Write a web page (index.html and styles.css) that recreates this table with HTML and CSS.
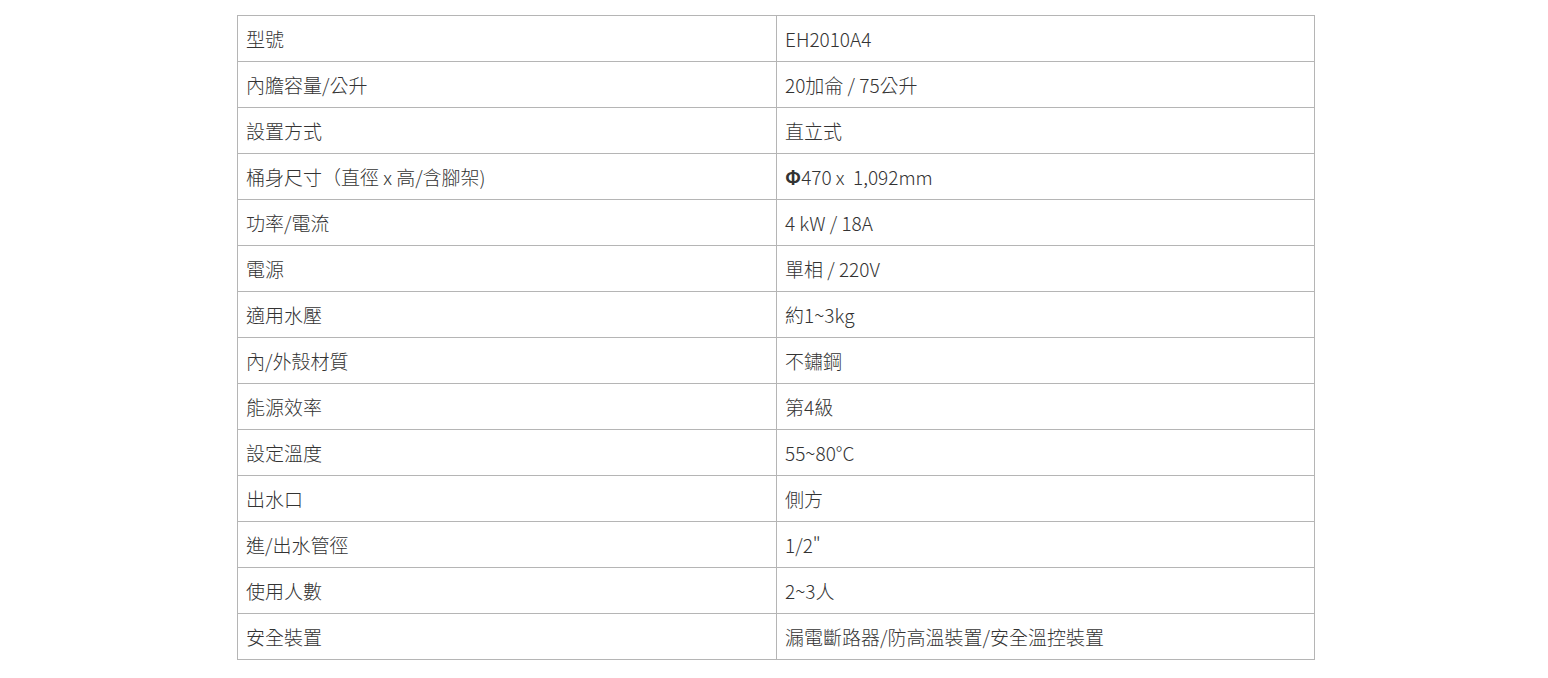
FILE: index.html
```html
<!DOCTYPE html>
<html lang="zh-Hant">
<head>
<meta charset="utf-8">
<link rel="stylesheet" href="styles.css">
</head>
<body>
<table class="spec">
<tbody>
<tr><td>型號</td><td>EH2010A4</td></tr>
<tr><td>內膽容量/公升</td><td>20加侖 / 75公升</td></tr>
<tr><td>設置方式</td><td>直立式</td></tr>
<tr><td>桶身尺寸（直徑 x 高/含腳架)</td><td><b class="phi">Φ</b>470 x&nbsp; 1,092mm</td></tr>
<tr><td>功率/電流</td><td>4 kW / 18A</td></tr>
<tr><td>電源</td><td>單相 / 220V</td></tr>
<tr><td>適用水壓</td><td>約1~3kg</td></tr>
<tr><td>內/外殼材質</td><td>不鏽鋼</td></tr>
<tr><td>能源效率</td><td>第4級</td></tr>
<tr><td>設定溫度</td><td>55~80°C</td></tr>
<tr><td>出水口</td><td>側方</td></tr>
<tr><td>進/出水管徑</td><td>1/2"</td></tr>
<tr><td>使用人數</td><td>2~3人</td></tr>
<tr><td>安全裝置</td><td>漏電斷路器/防高溫裝置/安全溫控裝置</td></tr>
</tbody>
</table>
</body>
</html>
```
FILE: styles.css
```css
html, body {
  margin: 0;
  padding: 0;
  background: #fff;
}
body {
  padding-top: 15px;
  font-family: "Noto Sans CJK TC", "Noto Sans", sans-serif;
  color: #333;
}
.spec {
  border-collapse: collapse;
  margin-left: 237px;
  width: 1078px;
  table-layout: fixed;
}
.spec td {
  border: 1px solid #b5b5b5;
  height: 46px;
  padding: 0 8px;
  box-sizing: border-box;
  font-size: 19px;
  line-height: 24px;
  vertical-align: middle;
  font-weight: 300;
}
.spec td:first-child {
  width: 539px;
}
.phi {
  font-weight: 700;
}
```
